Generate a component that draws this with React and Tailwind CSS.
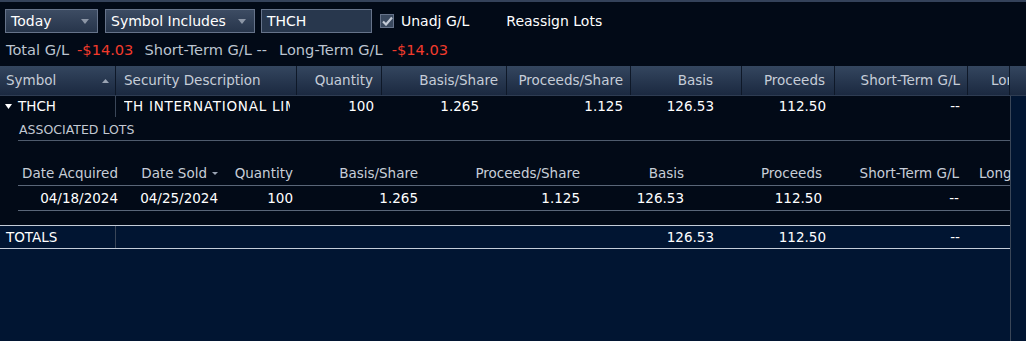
import React from 'react';

const MAIN_COLS = [
  { w: 116, label: 'Symbol', align: 'left', hp: 'pl-[6px]' },
  { w: 181, label: 'Security Description', align: 'left', hp: 'pl-[8px]' },
  { w: 85, label: 'Quantity', align: 'right', hp: 'pr-[8px]' },
  { w: 125, label: 'Basis/Share', align: 'right', hp: 'pr-[8px]' },
  { w: 124, label: 'Proceeds/Share', align: 'right', hp: 'pr-[7px]' },
  { w: 111, label: 'Basis', align: 'right', hp: 'pr-[28px]' },
  { w: 93, label: 'Proceeds', align: 'right', hp: 'pr-[9px]' },
  { w: 133, label: 'Short-Term G/L', align: 'right', hp: 'pr-[7px]' },
  { w: 42, label: 'Long-Term G/L', align: 'left', hp: 'pl-[23px]' },
];

const SUB_COLS = [
  { w: 106, label: 'Date Acquired', value: '04/18/2024' },
  { w: 100, label: 'Date Sold', value: '04/25/2024', sort: true },
  { w: 75, label: 'Quantity', value: '100' },
  { w: 125, label: 'Basis/Share', value: '1.265' },
  { w: 162, label: 'Proceeds/Share', value: '1.125' },
  { w: 104, label: 'Basis', value: '126.53' },
  { w: 138, label: 'Proceeds', value: '112.50' },
  { w: 137, label: 'Short-Term G/L', value: '--' },
];

function Select({ label, width }) {
  return (
    <div
      className="h-[24px] flex items-center justify-between pl-[5px] pr-[8px] border border-[#66738a] bg-gradient-to-b from-[#3d4c63] to-[#27354b] text-white"
      style={{ width }}
    >
      <span>{label}</span>
      <svg width="8" height="5" viewBox="0 0 8 5"><path d="M0 0h8L4 5z" fill="#8c96a6" /></svg>
    </div>
  );
}

export default function App() {
  return (
    <div
      className="w-[1026px] h-[341px] flex flex-col bg-[#020a17] text-[13.5px] leading-none overflow-hidden"
      style={{ fontFamily: '"DejaVu Sans", Verdana, sans-serif' }}
    >
      {/* barre d'outils */}
      <div className="h-[2px] bg-[#34425a]" />
      <div className="flex items-center h-[24px] mt-[7px] pl-[5px] text-[14px]">
        <Select label="Today" width={93} />
        <div className="w-[7px]" />
        <Select label="Symbol Includes" width={150} />
        <div className="ml-[6px] w-[111px] h-[24px] flex items-center pl-[5px] border border-[#66738a] bg-[#28374d] text-white">
          THCH
        </div>
        <div className="ml-[8px] w-[14px] h-[14px] border border-[#66738a] bg-[#3a495f] flex items-center justify-center">
          <svg width="11" height="10" viewBox="0 0 11 10">
            <path d="M1 5.5l3 3L10 1.5" fill="none" stroke="#c3cad6" strokeWidth="2.2" />
          </svg>
        </div>
        <span className="ml-[7px] text-white">Unadj G/L</span>
        <span className="ml-[37px] text-white">Reassign Lots</span>
      </div>
      <div className="flex items-center h-[16px] mt-[9px] pl-[6px] text-[14.6px] text-[#bcc4d0]">
        <span>Total G/L</span>
        <span className="ml-[8px] text-[#f23b2c]">-$14.03</span>
        <span className="ml-[11px]">Short-Term G/L --</span>
        <span className="ml-[12px]">Long-Term G/L</span>
        <span className="ml-[9px] text-[#f23b2c]">-$14.03</span>
      </div>

      {/* en-tête du tableau */}
      <div className="mt-[8px] flex h-[30px] bg-gradient-to-b from-[#34465f] to-[#1b2940] border-b border-[#2e3c52] text-[#c6cdd8]">
        {MAIN_COLS.map((c, i) => (
          <div
            key={c.label}
            className={`h-full shrink-0 flex items-center overflow-hidden whitespace-nowrap border-r border-[#0e1828] ${c.hp} ${c.align === 'right' ? 'justify-end' : 'justify-start'}`}
            style={{ width: c.w }}
          >
            <span className="shrink-0">{c.label}</span>
            {i === 0 && (
              <svg className="ml-auto mr-[6px]" width="7" height="4" viewBox="0 0 7 4"><path d="M0 4h7L3.5 0z" fill="#9aa4b4" /></svg>
            )}
          </div>
        ))}
        <div className="flex-1" />
      </div>

      <div className="flex-1 flex min-h-0">
        <div className="w-[1010px] flex flex-col">
          {/* ligne principale */}
          <div className="flex h-[21px] text-white">
            <div className="w-[116px] flex items-center pl-[5px] border-r border-[#3a4658]">
              <svg width="7" height="5" viewBox="0 0 7 5"><path d="M0 0h7L3.5 5z" fill="#ffffff" /></svg>
              <span className="ml-[6px]">THCH</span>
            </div>
            <div className="w-[181px] flex items-center pl-[8px] pr-[7px] overflow-hidden whitespace-nowrap">
              <span className="overflow-hidden tracking-[0.75px]">TH INTERNATIONAL LIMITED</span>
            </div>
            <div className="w-[85px] flex items-center justify-end pr-[8px]">100</div>
            <div className="w-[125px] flex items-center justify-end pr-[28px]">1.265</div>
            <div className="w-[124px] flex items-center justify-end pr-[8px]">1.125</div>
            <div className="w-[111px] flex items-center justify-end pr-[28px]">126.53</div>
            <div className="w-[93px] flex items-center justify-end pr-[9px]">112.50</div>
            <div className="w-[133px] flex items-center justify-end pr-[8px]">--</div>
          </div>

          {/* lots associés */}
          <div className="ml-[18px]">
            <div className="h-[24px] flex items-center pt-[3px] pl-[1px] border-b border-[#4f5b6d] text-[#c3c9d3] text-[12.5px]">
              ASSOCIATED LOTS
            </div>
            <div className="mt-[21px] flex h-[24px] border-b border-[#5a6678] text-[#c8ced8] whitespace-nowrap">
              {SUB_COLS.map(c => (
                <div key={c.label} className="flex items-center justify-end pr-[6px]" style={{ width: c.w }}>
                  <span>{c.label}</span>
                  {c.sort && (
                    <svg className="ml-[5px]" width="6" height="3" viewBox="0 0 6 3"><path d="M0 0h6L3 3z" fill="#9aa4b4" /></svg>
                  )}
                </div>
              ))}
              <div className="flex-1 flex items-center pl-[14px] overflow-hidden">Long-Term G/L</div>
            </div>
            <div className="flex h-[25px] border-b border-[#5a6678] text-white">
              {SUB_COLS.map(c => (
                <div key={c.label} className="flex items-center justify-end pr-[6px] pt-[1px]" style={{ width: c.w }}>
                  {c.value}
                </div>
              ))}
            </div>
          </div>

          {/* totaux */}
          <div className="mt-[14px] flex h-[24px] bg-[#011532] border-t border-[#c4ccd8] border-b border-[#56637a] text-white">
            <div className="w-[116px] flex items-center pl-[6px] pt-[1px] border-r border-[#3a4658]">TOTALS</div>
            <div className="w-[515px]" />
            <div className="w-[111px] flex items-center justify-end pr-[28px] pt-[1px]">126.53</div>
            <div className="w-[93px] flex items-center justify-end pr-[9px] pt-[1px]">112.50</div>
            <div className="w-[133px] flex items-center justify-end pr-[8px] pt-[1px]">--</div>
          </div>
          <div className="flex-1 bg-[#011532]" />
        </div>
        <div className="flex-1 bg-[#011532] border-l border-[#3a4658]" />
      </div>
    </div>
  );
}
